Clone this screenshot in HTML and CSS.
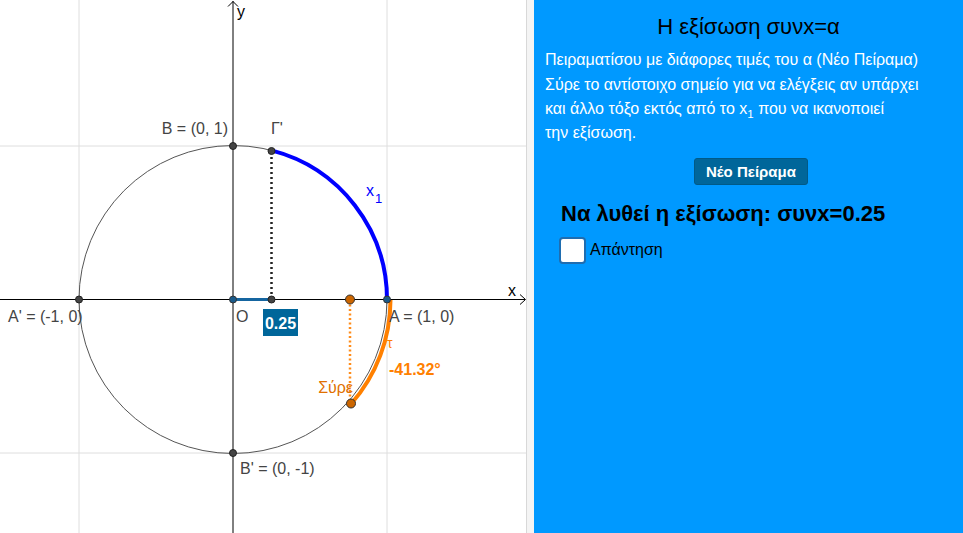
FILE: index.html
```html
<!DOCTYPE html>
<html lang="el">
<head>
<meta charset="utf-8">
<title>Η εξίσωση συνx=α</title>
<link rel="stylesheet" href="styles.css">
</head>
<body>
<div class="app">
  <div class="graph">
    <svg class="canvas" width="526" height="533" viewBox="0 0 526 533" xmlns="http://www.w3.org/2000/svg">
      <g class="grid">
        <line x1="79" y1="0" x2="79" y2="533"/>
        <line x1="387" y1="0" x2="387" y2="533"/>
        <line x1="0" y1="146" x2="526" y2="146"/>
        <line x1="0" y1="453" x2="526" y2="453"/>
      </g>
      <g class="axes">
        <line x1="233" y1="1" x2="233" y2="533"/>
        <line x1="0" y1="299.5" x2="525" y2="299.5"/>
        <path d="M228 6.5 L233 1.5 L238 6.5"/>
        <path d="M520 294.5 L525.5 299.5 L520 304.5"/>
      </g>
      <text class="axis-label" x="237" y="17">y</text>
      <text class="axis-label" x="508" y="296">x</text>
      <circle class="unit" cx="233" cy="299.5" r="154"/>
      <line class="dots-black" x1="271.5" y1="152" x2="271.5" y2="299"/>
      <line class="dots-orange" x1="350" y1="300" x2="350" y2="402"/>
      <path class="arc-blue" d="M271.5 150.4 A154 154 0 0 1 387 299.5"/>
      <path class="arc-orange" d="M390.5 300 A157.5 157.5 0 0 1 351 404"/>
      <line class="seg" x1="233" y1="299.5" x2="271.5" y2="299.5"/>
      <g class="pt">
        <circle cx="79" cy="299.5" r="3.5"/>
        <circle cx="233" cy="146" r="3.5"/>
        <circle cx="233" cy="453" r="3.5"/>
        <circle cx="271.5" cy="151" r="3.5"/>
        <circle cx="271.5" cy="299.5" r="3.5"/>
      </g>
      <g class="pt-blue">
        <circle cx="233" cy="299.5" r="3.5"/>
        <circle cx="387" cy="299.5" r="3.5"/>
      </g>
      <g class="pt-orange">
        <circle cx="350" cy="299.5" r="4.5"/>
        <circle cx="351" cy="403.5" r="4.5"/>
      </g>
      <g class="lbl">
        <text x="228" y="134" text-anchor="end">B = (0, 1)</text>
        <text x="271" y="134">Γ'</text>
        <text x="8" y="322">A' = (-1, 0)</text>
        <text x="236" y="322">O</text>
        <text x="389" y="322">A = (1, 0)</text>
        <text x="240" y="474">B' = (0, -1)</text>
      </g>
      <text class="lbl-blue" x="366" y="196">x<tspan class="sub" dx="1" dy="7">1</tspan></text>
      <rect class="valbox" x="263" y="309" width="35" height="27"/>
      <text class="valtext" x="280.5" y="329" text-anchor="middle">0.25</text>
      <text class="lbl-tau" x="387" y="348">τ</text>
      <text class="lbl-deg" x="389" y="375">-41.32°</text>
      <text class="lbl-drag" x="353" y="393" text-anchor="end">Σύρε</text>
    </svg>
  </div>
  <div class="divider"></div>
  <div class="panel">
    <h1 class="title">Η εξίσωση συνx=α</h1>
    <p class="intro">Πειραματίσου με διάφορες τιμές του α (Νέο Πείραμα)<br>Σύρε το αντίστοιχο σημείο για να ελέγξεις αν υπάρχει<br>και άλλο τόξο εκτός από το x<sub class="isub">1</sub> που να ικανοποιεί<br>την εξίσωση.</p>
    <div class="btn-row"><button class="btn" type="button">Νέο Πείραμα</button></div>
    <h2 class="task">Να λυθεί η εξίσωση: συνx=0.25</h2>
    <label class="answer"><span class="box"></span><span class="answer-text">Απάντηση</span></label>
  </div>
</div>
</body>
</html>
```

FILE: styles.css
```css
html, body {
  margin: 0;
  padding: 0;
  width: 963px;
  height: 533px;
  overflow: hidden;
  background: #ffffff;
  font-family: "Liberation Sans", Arial, sans-serif;
}

.app {
  display: flex;
  width: 963px;
  height: 533px;
}

.graph {
  width: 526px;
  height: 533px;
  flex: none;
  background: #ffffff;
}

.canvas {
  display: block;
  font-family: "Liberation Sans", Arial, sans-serif;
}

.grid line {
  stroke: #dedede;
  stroke-width: 1;
}

.axes line,
.axes path {
  stroke: #000000;
  stroke-width: 1;
  fill: none;
}

.axis-label {
  font-size: 16px;
  fill: #000000;
}

.unit {
  fill: none;
  stroke: #555555;
  stroke-width: 1;
}

.dots-black {
  stroke: #222222;
  stroke-width: 2.5;
  stroke-dasharray: 2 3;
}

.dots-orange {
  stroke: #ff8c1a;
  stroke-width: 2.5;
  stroke-dasharray: 2 2.5;
}

.arc-blue {
  fill: none;
  stroke: #0000ff;
  stroke-width: 4;
}

.arc-orange {
  fill: none;
  stroke: #ff8000;
  stroke-width: 4;
}

.seg {
  stroke: #1565a0;
  stroke-width: 3;
}

.pt circle {
  fill: #444444;
  stroke: #222222;
  stroke-width: 1;
}

.pt-blue circle {
  fill: #1a5a8a;
  stroke: #333333;
  stroke-width: 1;
}

.pt-orange circle {
  fill: #cc6600;
  stroke: #333333;
  stroke-width: 1;
}

.lbl text {
  font-size: 16px;
  fill: #444444;
}

.lbl-blue {
  font-size: 16px;
  fill: #0000ff;
}

.sub {
  font-size: 13px;
}

.valbox {
  fill: #00669a;
}

.valtext {
  font-size: 16px;
  font-weight: bold;
  fill: #ffffff;
}

.lbl-tau {
  font-size: 14px;
  fill: #ff8000;
}

.lbl-deg {
  font-size: 16px;
  font-weight: bold;
  fill: #ff8000;
}

.lbl-drag {
  font-size: 16px;
  fill: #e07000;
}

.divider {
  width: 7px;
  flex: none;
  background: #f4f4f4;
  border-left: 1px solid #d8d8d8;
}

.panel {
  flex: 1;
  background: #0099ff;
  padding: 14px 11px 0 11px;
  box-sizing: border-box;
}

.title {
  margin: 0;
  font-size: 22px;
  line-height: 26px;
  font-weight: normal;
  color: #000000;
  text-align: center;
}

.intro {
  margin: 8.3px 0 0 0;
  font-size: 16px;
  line-height: 24.3px;
  color: #ffffff;
}

.isub {
  font-size: 11.5px;
  line-height: 0;
  vertical-align: -4px;
}

.btn-row {
  display: flex;
  justify-content: center;
  margin-top: 12.5px;
}

.btn {
  height: 27px;
  padding: 0 11px;
  background: #00669a;
  border: 1px solid #005a88;
  border-radius: 3px;
  color: #ffffff;
  font-family: "Liberation Sans", Arial, sans-serif;
  font-size: 15px;
  font-weight: bold;
  margin-left: 5px;
}

.task {
  margin: 16.5px 0 0 16px;
  font-size: 22px;
  line-height: 26px;
  font-weight: bold;
  color: #000000;
}

.answer {
  display: flex;
  align-items: center;
  margin: 9.5px 0 0 14px;
  gap: 4px;
}

.box {
  width: 23px;
  height: 23px;
  background: #ffffff;
  border: 2px solid #1f6db0;
  border-radius: 4px;
}

.answer-text {
  font-size: 16px;
  color: #000000;
}
```
